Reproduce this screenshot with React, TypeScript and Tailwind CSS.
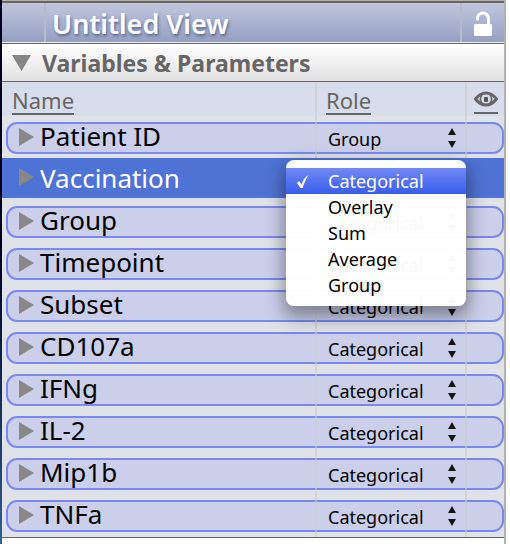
import { useState } from "react";

const ROLES = ["Categorical", "Overlay", "Sum", "Average", "Group"];

const VARIABLES = [
  { name: "Patient ID", role: "Group" },
  { name: "Vaccination", role: "Categorical" },
  { name: "Group", role: "Categorical" },
  { name: "Timepoint", role: "Categorical" },
  { name: "Subset", role: "Categorical" },
  { name: "CD107a", role: "Categorical" },
  { name: "IFNg", role: "Categorical" },
  { name: "IL-2", role: "Categorical" },
  { name: "Mip1b", role: "Categorical" },
  { name: "TNFa", role: "Categorical" },
];

function UnlockIcon() {
  return (
    <svg width="20" height="26" viewBox="0 0 20 26" aria-hidden="true">
      <path d="M4.500 9V8.500a5.500 5.500 0 0 1 11 0V15" fill="none" stroke="white" strokeWidth="3" strokeLinecap="round" />
      <rect x="1" y="14" width="18" height="12" rx="1.500" fill="white" />
    </svg>
  );
}

function EyeIcon() {
  return (
    <svg width="24" height="16" viewBox="0 0 24 16" aria-hidden="true" fill="none" stroke="#666">
      <path d="M1.500 8C5 3.500 8.500 2 12 2S19 3.500 22.500 8C19 12.500 15.500 14 12 14S5 12.500 1.500 8Z" strokeWidth="3" />
      <path d="M8 4C6 6.500 6 9.500 8 12M16 4C18 6.500 18 9.500 16 12" strokeWidth="1.500" />
      <rect x="10" y="6" width="4" height="5" rx="1" fill="#555" stroke="none" />
    </svg>
  );
}

function Stepper() {
  return (
    <svg width="8" height="20" viewBox="0 0 8 20" className="pointer-events-none" aria-hidden="true">
      <path d="M4 0L8 7H0Z M4 20L0 13H8Z" fill="#151515" />
    </svg>
  );
}

function Disclosure() {
  return (
    <svg width="15" height="20" viewBox="0 0 15 20" aria-hidden="true">
      <path d="M0 0L15 9L0 18Z" fill="#888" />
    </svg>
  );
}

function VariableRow({ name, role }: { name: string; role: string }) {
  const [value, setValue] = useState(role);
  return (
    <li className="h-[42px] pt-[6px] pl-1">
      <div className="flex h-8 items-center rounded-[11px] border-2 border-[#7b88f0] bg-[#cbcfea]">
        <button type="button" aria-expanded="false" className="flex min-w-0 flex-1 items-center gap-[6px] pl-[11px] text-left text-[26px] leading-7 text-black">
          <Disclosure />
          <span className="pb-[3px] leading-[25px]">{name}</span>
        </button>
        <label className="flex w-[185px] items-center">
          <select
            aria-label={`Role of ${name}`}
            value={value}
            onChange={(e) => setValue(e.target.value)}
            className="w-[131px] appearance-none bg-transparent pt-[2px] pl-[11px] text-[18px] leading-[26px] text-black outline-none"
          >
            {ROLES.map((r) => <option key={r}>{r}</option>)}
          </select>
          <Stepper />
        </label>
      </div>
    </li>
  );
}

function RoleMenu({ selected, onSelect }: { selected: string; onSelect: (r: string) => void }) {
  return (
    <div role="menu" aria-label="Role" className="absolute top-[2px] right-[38px] z-20 w-[180px] rounded-lg bg-white/98 py-2 shadow-[0_8px_18px_3px_rgba(0,0,0,0.38)]">
      {ROLES.map((r) => (
        <button
          key={r}
          type="button"
          role="menuitemradio"
          aria-checked={r === selected}
          onClick={() => onSelect(r)}
          className={`flex h-[26px] w-full items-center text-left text-[18px] leading-[26px] ${r === selected ? "bg-linear-to-b from-[#7189f5] to-[#3a5cec] text-white" : "text-black"}`}
        >
          <span className="flex w-[42px] pl-[10px]">
            {r === selected && (
              <svg width="14" height="15" viewBox="0 0 14 15" aria-hidden="true"><path d="M1 9L3 7L5.500 10.500C7 6 9 3 12.500 1C10 5 8 9 6.500 14H4.500Z" fill="white" /></svg>
            )}
          </span>
          {r}
        </button>
      ))}
    </div>
  );
}

export default function App() {
  const [selected, setSelected] = useState("Categorical");
  return (
    <div className="flex min-h-screen bg-white font-['Noto_Sans','Lucida_Grande',sans-serif]">
      <div className="w-[2px] shrink-0 bg-linear-to-b from-[#02021e] from-45% to-[#355f90]" />
      <main className="mr-1 min-w-0 flex-1 border-t border-r-2 border-[#b2b2b2]">
        <header className="flex h-[42px] items-stretch border-t-2 border-b border-t-[#666] border-b-[#eee] bg-linear-to-b from-[#c0c7df] to-[#959fc0]">
          <div className="w-[44px] border-r-2 border-[#b5bbcb]" />
          <h1 className="flex-1 pt-[2px] pl-[6px] text-[27px] leading-[38px] font-semibold text-white [text-shadow:1px_2px_3px_rgba(60,75,120,0.7)]">Untitled View</h1>
          <button type="button" aria-label="Unlock view" className="flex w-[44px] items-center justify-center border-l-2 border-[#b5bbcb] pt-px"><UnlockIcon /></button>
        </header>
        <h2 className="h-[39px] border-y border-[#666] bg-linear-to-b from-white to-[#e1e1e1]">
          <button type="button" aria-expanded="true" className="flex h-full w-full items-center gap-[11px] pl-[10px] text-left text-[23px] leading-8 font-bold text-[#666]">
            <svg width="19" height="16" viewBox="0 0 19 16" aria-hidden="true"><path d="M0 0H19L9.500 16Z" fill="#858585" /></svg>
            Variables &amp; Parameters
          </button>
        </h2>
        <section className="relative border-b border-[#666] bg-[#dfe2e9] pb-px">
          <div className="flex h-[34px] items-start bg-[#d7ddea] pt-1 text-[22px] leading-7 text-[#666]">
            <div className="flex-1 pl-[10px]"><span className="inline-block h-[28px] border-b-2 border-[#666] leading-[26px]">Name</span></div>
            <div className="w-[148px]"><span className="inline-block h-[28px] border-b-2 border-[#666] leading-[26px]">Role</span></div>
            <div className="mr-[6px] flex h-[28px] w-6 items-center border-b-2 border-[#666]"><EyeIcon /></div>
          </div>
          <ul>
            {VARIABLES.map((v) =>
              v.name === "Vaccination" ? (
                <li key={v.name} className="relative z-20 h-[42px]">
                  <button type="button" aria-expanded="false" className="flex h-10 w-full items-center gap-[6px] bg-[#4f73d4] pl-[17px] text-left text-[26px] leading-7 text-white">
                    <Disclosure />
                    {v.name}
                  </button>
                  <RoleMenu selected={selected} onSelect={setSelected} />
                </li>
              ) : (
                <VariableRow key={v.name} {...v} />
              ),
            )}
          </ul>
          <div className="pointer-events-none absolute inset-y-0 right-[37px] z-10 w-[152px] border-x-2 border-[#ccc]/60" />
        </section>
      </main>
    </div>
  );
}
